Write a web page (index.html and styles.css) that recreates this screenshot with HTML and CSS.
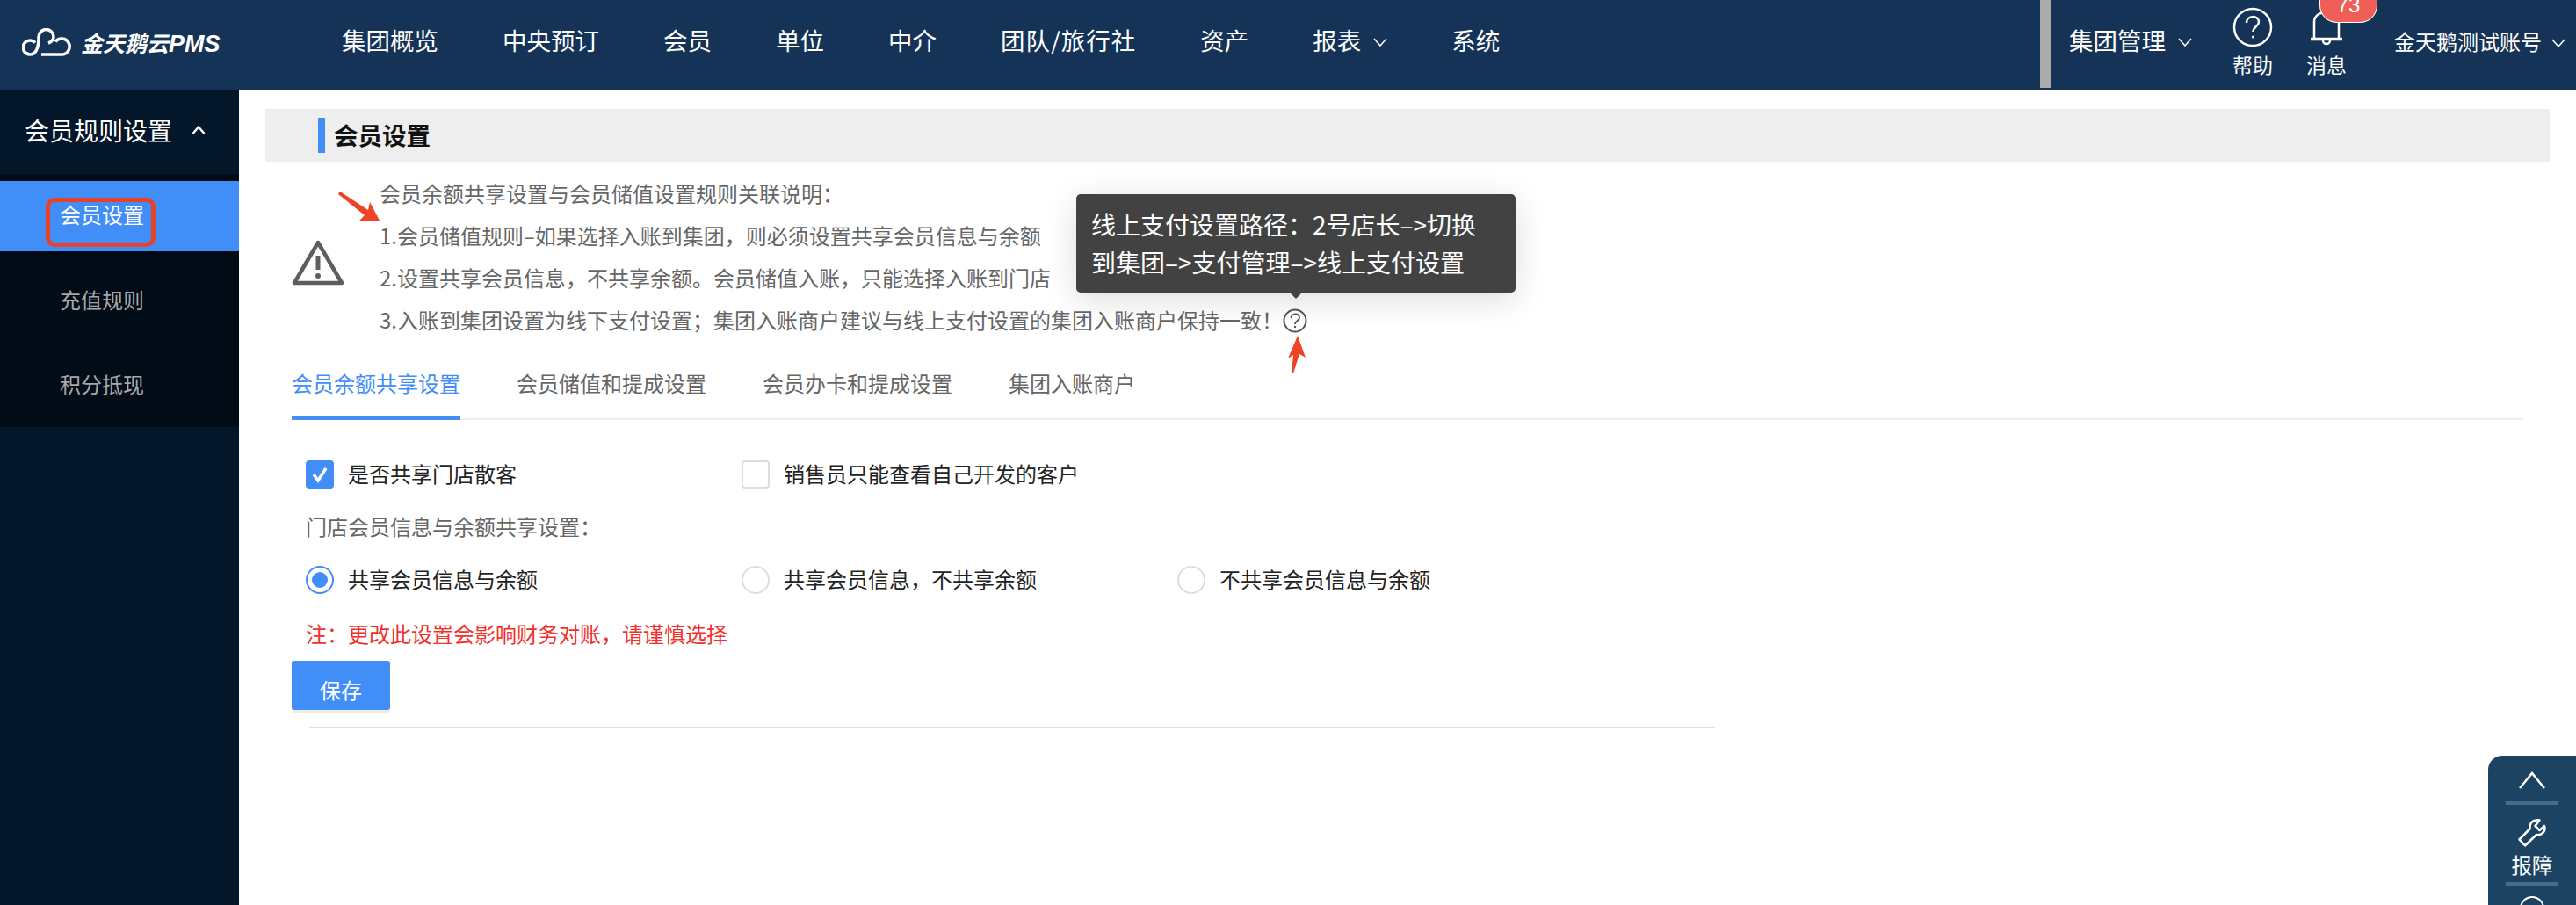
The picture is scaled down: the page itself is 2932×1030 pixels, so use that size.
FILE: index.html
```html
<!DOCTYPE html>
<html lang="zh-CN">
<head>
<meta charset="utf-8">
<title>会员设置</title>
<link rel="stylesheet" href="styles.css">
</head>
<body>
<header class="topbar">
  <div class="logo">
    <svg class="logo-icon" viewBox="0 0 56 34" fill="none" stroke="#fff" stroke-width="3.500"><path d="M22 30H45A9 9 0 1 0 38 15.500"/><path d="M30 17C33 16 36 13 36 10A8.500 8.500 0 0 0 19 10C19 22 16 30 9 30A8 8 0 1 1 15 16.500"/></svg>
    <span class="logo-text">金天鹅云<b>PMS</b></span>
  </div>
  <nav class="nav">
    <a>集团概览</a><a>中央预订</a><a>会员</a><a>单位</a><a>中介</a><a class="wide">团队/旅行社</a><a>资产</a>
    <a class="has-caret">报表<svg class="caret" viewBox="0 0 16 10"><path d="M1 1l7 8 7-8"/></svg></a>
    <a>系统</a>
  </nav>
  <div class="top-right">
    <div class="divider-bar"></div>
    <a class="group-menu">集团管理<svg class="caret" viewBox="0 0 16 10"><path d="M1 1l7 8 7-8"/></svg></a>
    <div class="tool tool-help">
      <svg class="tool-icon" viewBox="0 0 46 46" fill="none" stroke="#fff"><circle cx="23" cy="23" r="21" stroke-width="2.500"/><path d="M16 18c0-9 14-9 14-1 0 5-6.500 5-6.500 11" stroke-width="2.500"/><circle cx="23.500" cy="34" r="1.600" fill="#fff" stroke="none"/></svg>
      <span>帮助</span>
    </div>
    <div class="tool tool-msg">
      <svg class="tool-icon" viewBox="0 0 46 46" fill="none" stroke="#fff" stroke-width="2.500"><path d="M9 36V17c0-15 28-15 28 0v19"/><path d="M5 36.500h36" stroke-width="3.500"/><path d="M19 38a4 4 0 0 0 8 0"/></svg>
      <span>消息</span>
      <b class="badge">73</b>
    </div>
    <a class="account">金天鹅测试账号<svg class="caret" viewBox="0 0 16 10"><path d="M1 1l7 8 7-8"/></svg></a>
  </div>
</header>
<div class="shell">
  <aside class="sidebar">
    <div class="side-title">会员规则设置<svg class="side-chevron" viewBox="0 0 16 10"><path d="M1.500 9L8 1.500 14.500 9"/></svg></div>
    <ul class="side-list">
      <li class="active">会员设置<span class="mark-box"></span></li>
      <li>充值规则</li>
      <li>积分抵现</li>
    </ul>
  </aside>
  <main class="main">
    <div class="page-title"><h1>会员设置</h1></div>
    <section class="notice">
      <svg class="warn" viewBox="0 0 60 54" fill="none" stroke="#5e5e5e"><path d="M30 4L3 50h54z" stroke-width="4.500" stroke-linejoin="round"/><path d="M30 19v16" stroke-width="5"/><circle cx="30" cy="42" r="3" fill="#5e5e5e" stroke="none"/></svg>
      <div class="notice-text">
        <p>会员余额共享设置与会员储值设置规则关联说明&#xFF1A;</p>
        <p>1.会员储值规则–如果选择入账到集团&#xFF0C;则必须设置共享会员信息与余额</p>
        <p>2.设置共享会员信息&#xFF0C;不共享余额。会员储值入账&#xFF0C;只能选择入账到门店</p>
        <p>3.入账到集团设置为线下支付设置&#xFF1B;集团入账商户建议与线上支付设置的集团入账商户保持一致&#xFF01;<svg class="help-q" viewBox="0 0 28 28" fill="none" stroke="#555"><circle cx="14" cy="14" r="12.500" stroke-width="2"/><path d="M9.500 11c0-6 9.500-6 9.500-.500 0 3.500-5 3.500-5 7.500" stroke-width="1.800"/><circle cx="14" cy="21" r="1.200" fill="#555" stroke="none"/></svg></p>
      </div>
      <div class="tooltip">线上支付设置路径&#xFF1A;2号店长&#x2013;&gt;切换<br>到集团&#x2013;&gt;支付管理&#x2013;&gt;线上支付设置</div>
      <svg class="arrow arrow-a" viewBox="0 0 48 34"><path d="M1 1L2 0 34 21 36 12 47 33 24 33 30 27 0 3z" fill="#ee4324"/></svg>
      <svg class="arrow arrow-b" viewBox="0 0 22 44"><path d="M12 0L21 25 14 21 7 43 5 43 7 22 1 26z" fill="#ee4324"/></svg>
    </section>
    <div class="tabs">
      <a class="tab on">会员余额共享设置</a>
      <a class="tab">会员储值和提成设置</a>
      <a class="tab">会员办卡和提成设置</a>
      <a class="tab">集团入账商户</a>
    </div>
    <form class="form">
      <div class="opt-row">
        <label class="opt"><span class="box checked"><svg viewBox="0 0 32 32" fill="none" stroke="#fff" stroke-width="3.500"><path d="M9 16l5 7 9-14"/></svg></span>是否共享门店散客</label>
        <label class="opt"><span class="box"></span>销售员只能查看自己开发的客户</label>
      </div>
      <p class="field-label">门店会员信息与余额共享设置&#xFF1A;</p>
      <div class="opt-row">
        <label class="opt"><span class="radio selected"></span>共享会员信息与余额</label>
        <label class="opt"><span class="radio"></span>共享会员信息&#xFF0C;不共享余额</label>
        <label class="opt"><span class="radio"></span>不共享会员信息与余额</label>
      </div>
      <p class="warn-note">注&#xFF1A;更改此设置会影响财务对账&#xFF0C;请谨慎选择</p>
      <button class="save" type="button">保存</button>
      <hr class="rule">
    </form>
  </main>
</div>
<div class="float-panel">
  <svg class="fp-up" viewBox="0 0 30 20" fill="none" stroke="#fff" stroke-width="2.500"><path d="M1 19L15 2l14 17"/></svg>
  <div class="fp-line"></div>
  <svg class="fp-wrench" viewBox="0 0 32 32" fill="none" stroke="#fff" stroke-width="2.500" stroke-linejoin="round"><path d="M21 1.500c-5 0-8.500 4.500-7.200 9.500L1.500 23.500 8 30.500 21 18c5 1.200 9.500-2.500 9.500-7.500 0-1-.2-1.800-.5-2.500l-5.500 5-5-5 5-6.500c-1-.3-2.200-.5-3.500-.5z"/></svg>
  <span class="fp-label">报障</span>
  <div class="fp-line"></div>
  <span class="fp-dot"></span>
</div>
</body>
</html>
```
FILE: styles.css
```css
* { box-sizing: border-box; }
html, body { margin: 0; height: 100%; }
body {
  width: 2932px;
  height: 1030px;
  overflow: hidden;
  background: #fff;
  font-family: "Noto Sans CJK SC", "Liberation Sans", sans-serif;
  font-size: 24px;
  color: #666;
  position: relative;
}
p, h1, ul { margin: 0; padding: 0; }
a { color: inherit; text-decoration: none; }

.topbar {
  height: 102px;
  background: #143357;
  color: #fff;
  display: flex;
  align-items: flex-start;
}
.logo {
  width: 389px;
  height: 102px;
  padding: 32px 0 0 25px;
  display: flex;
  align-items: flex-start;
  flex: none;
}
.logo-icon { width: 56px; height: 34px; flex: none; }
.logo-text {
  margin: 0 0 0 11px;
  font-size: 25px;
  line-height: 32px;
  font-weight: 700;
  font-style: italic;
  white-space: nowrap;
}
.logo-text b { font-family: "Liberation Sans", sans-serif; font-size: 27px; }
.nav {
  display: flex;
  gap: 73px;
  height: 90px;
  align-items: center;
  font-size: 27.5px;
  white-space: nowrap;
}
.wide { letter-spacing: 1px; }
.has-caret, .group-menu, .account { display: flex; align-items: center; }
.caret { width: 16px; height: 10px; margin-left: 14px; margin-top: 6px; fill: none; stroke: #fff; stroke-width: 1.500; flex: none; }
.top-right {
  margin-left: auto;
  height: 102px;
  display: flex;
  align-items: flex-start;
  white-space: nowrap;
}
.divider-bar { width: 12px; height: 100px; background: #ababab; }
.group-menu { margin: 0 0 0 21px; height: 90px; font-size: 27.5px; width: 186px; }
.tool {
  width: 46px;
  display: flex;
  flex-direction: column;
  align-items: center;
  position: relative;
  font-size: 23px;
  line-height: 30px;
}
.tool-help { margin-top: 8px; }
.tool-msg { margin: 8px 0 0 38px; }
.tool-icon { width: 46px; height: 46px; flex: none; margin-bottom: 4px; }
.badge {
  position: absolute;
  left: 15px;
  top: -22px;
  width: 66px;
  height: 40px;
  background: #ef5f58;
  border: 1.500px solid #fff;
  border-radius: 0 0 20px 20px / 0 0 20px 20px;
  border-top: 0;
  font-weight: 400;
  font-size: 24px;
  line-height: 40px;
  text-align: center;
  font-family: "Liberation Sans", sans-serif;
}
.account { margin: 0 12px 0 54px; height: 92px; font-size: 24px; }
.account .caret { margin-left: 11px; }

.shell { display: flex; height: 928px; }
.sidebar { width: 272px; flex: none; background: #04162a; color: #fff; }
.side-title {
  height: 96px;
  padding: 0 0 4px 28px;
  display: flex;
  align-items: center;
  font-size: 28px;
}
.side-chevron { width: 16px; height: 10px; margin-left: 22px; fill: none; stroke: #fff; stroke-width: 2.500; }
.side-list { list-style: none; background: #010c17; padding-top: 8px; }
.side-list li {
  height: 100px;
  padding-left: 68px;
  display: flex;
  align-items: center;
  font-size: 24px;
  color: #a6a8aa;
}
.side-list li.active {
  height: 80px;
  background: #428ef8;
  color: #fff;
  position: relative;
  padding-bottom: 2px;
  align-items: flex-start;
  padding-top: 20px;
  line-height: 36px;
}
.side-list li:nth-child(2) { height: 100px; padding-top: 8px; }
.side-list li:nth-child(3) { height: 100px; padding-top: 0; }
.mark-box {
  position: absolute;
  left: 52px;
  top: 19px;
  width: 125px;
  height: 56px;
  border: 5px solid #e8412a;
  border-radius: 10px;
}

.main { flex: 1; min-width: 0; padding: 22px 30px 0; }
.page-title {
  height: 60px;
  background: #eee;
  padding: 10px 0 0 60px;
}
.page-title h1 {
  height: 40px;
  border-left: 8px solid #428ef8;
  padding-left: 10px;
  font-size: 27.500px;
  font-weight: 700;
  line-height: 38px;
  color: #111;
}
.notice {
  position: relative;
  margin-top: 14px;
  padding-left: 30px;
  height: 192px;
  display: flex;
  align-items: flex-start;
}
.warn { width: 60px; height: 54px; margin-top: 74px; flex: none; }
.notice-text { margin: -2px 0 0 40px; line-height: 48px; font-size: 24px; white-space: nowrap; color: #666; }
.help-q { width: 28px; height: 28px; margin-left: 0; vertical-align: -5px; }
.tooltip {
  position: absolute;
  left: 923px;
  top: 23px;
  width: 500px;
  height: 112px;
  padding: 13px 0 0 17px;
  background: #424242;
  border-radius: 5px;
  color: #fff;
  font-size: 28px;
  line-height: 43px;
  white-space: nowrap;
  box-shadow: 0 8px 36px rgba(0,0,0,.14);
}
.tooltip::after {
  content: "";
  position: absolute;
  left: 243px;
  top: 100%;
  border: 7px solid transparent;
  border-top-color: #424242;
  border-bottom: 0;
}
.arrow { position: absolute; }
.arrow-a { left: 83px; top: 20px; width: 48px; height: 34px; }
.arrow-b { left: 1163px; top: 184px; width: 22px; height: 44px; }

.tabs {
  margin: 0 30px 0 30px;
  height: 88px;
  display: flex;
  gap: 64px;
  border-bottom: 2px solid #eee;
  font-size: 24px;
  line-height: 92px;
  white-space: nowrap;
  color: #666;
}
.tab { height: 88px; display: block; }
.tab.on { color: #428ef8; border-bottom: 4px solid #428ef8; }

.form { padding: 46px 0 0 46px; position: relative; }
.opt-row { display: flex; height: 32px; }
.opt { width: 496px; display: flex; align-items: flex-start; gap: 16px; color: #222; font-size: 24px; line-height: 29px; white-space: nowrap; }
.box { width: 32px; height: 32px; border: 2px solid #ddd; border-radius: 4px; flex: none; background: #fff; }
.box svg { display: block; width: 32px; height: 32px; margin: -2px; }
.box.checked { background: #428ef8; border-color: #428ef8; }
.radio { width: 32px; height: 32px; border: 2px solid #ddd; border-radius: 50%; flex: none; position: relative; background: #fff; }
.radio.selected { border-color: #428ef8; }
.radio.selected::after {
  content: "";
  position: absolute;
  left: 5px; top: 5px;
  width: 18px; height: 18px;
  border-radius: 50%;
  background: #428ef8;
}
.field-label { margin: 26px 0; line-height: 34px; height: 36px; font-size: 24px; color: #666; }
.warn-note { margin-top: 28px; line-height: 34px; height: 36px; color: #f2302a; font-size: 24px; }
.save {
  display: block;
  margin: 12px 0 0 -16px;
  width: 112px;
  height: 56px;
  padding: 8px 0 0;
  background: #428ef8;
  color: #fff;
  border: 0;
  border-radius: 3px;
  box-shadow: 0 4px 0 #eee;
  font: inherit;
  font-size: 24px;
}
.rule { width: 1600px; height: 2px; margin: 19px 0 0 4px; border: 0; background: #ddd; }

.float-panel {
  position: absolute;
  left: 2832px;
  top: 860px;
  width: 100px;
  height: 170px;
  padding-top: 18px;
  background: #1c4361;
  border-top-left-radius: 16px;
  color: #fff;
  display: flex;
  flex-direction: column;
  align-items: center;
  overflow: hidden;
}
.fp-up { width: 30px; height: 20px; flex: none; }
.fp-line { width: 60px; height: 4px; background: #4a6c86; flex: none; }
.fp-up + .fp-line { margin-top: 14px; }
.fp-wrench { width: 32px; height: 32px; margin-top: 16px; flex: none; }
.fp-label { font-size: 23.500px; line-height: 32px; margin-top: 4px; flex: none; }
.fp-label + .fp-line { margin-top: 4px; }
.fp-dot { width: 28px; height: 28px; border: 2px solid #fff; border-radius: 50%; margin-top: 12px; flex: none; }
```
